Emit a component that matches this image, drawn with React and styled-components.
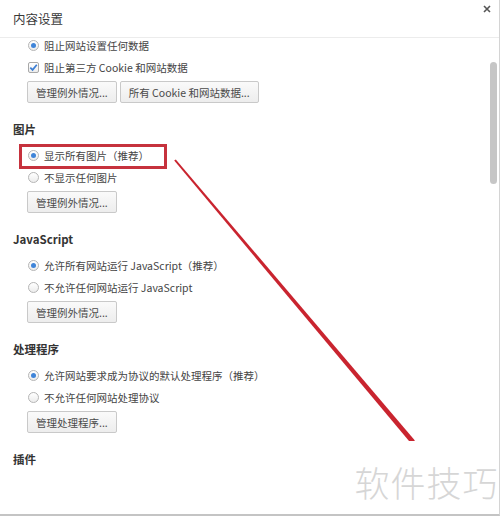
import styled, { createGlobalStyle } from 'styled-components';

const GlobalStyle = createGlobalStyle`
  body {
    margin: 0;
    background: #fff;
    font-family: 'Noto Sans CJK SC', 'Noto Sans', sans-serif;
  }
`;

const sections = [
  {
    title: null,
    options: [
      { type: 'radio', label: '阻止网站设置任何数据', checked: true },
      { type: 'checkbox', label: '阻止第三方 Cookie 和网站数据', checked: true },
    ],
    buttons: ['管理例外情况...', '所有 Cookie 和网站数据...'],
  },
  {
    title: '图片',
    options: [
      { type: 'radio', label: '显示所有图片（推荐）', checked: true },
      { type: 'radio', label: '不显示任何图片' },
    ],
    buttons: ['管理例外情况...'],
  },
  {
    title: 'JavaScript',
    options: [
      { type: 'radio', label: '允许所有网站运行 JavaScript（推荐）', checked: true },
      { type: 'radio', label: '不允许任何网站运行 JavaScript' },
    ],
    buttons: ['管理例外情况...'],
  },
  {
    title: '处理程序',
    options: [
      { type: 'radio', label: '允许网站要求成为协议的默认处理程序（推荐）', checked: true },
      { type: 'radio', label: '不允许任何网站处理协议' },
    ],
    buttons: ['管理处理程序...'],
  },
  {
    title: '插件',
    options: [],
    buttons: [],
  },
];

const App = () => {
  return (
    <>
      <GlobalStyle />
      <Dialog>
        <Header>
          <Title>内容设置</Title>
          <CloseButton type="button">
            <svg width="8" height="8" viewBox="0 0 8 8">
              <path d="M1 1L7 7M7 1L1 7" stroke="#555" strokeWidth="1.6" />
            </svg>
          </CloseButton>
        </Header>

        <Body>
          <Content>
            <Scrolled>
              {sections.map((section, i) => (
                <Section key={i} $first={i === 0}>
                  {section.title && <Heading>{section.title}</Heading>}
                  {section.options.map(opt => (
                    <OptionRow key={opt.label}>
                      {opt.type === 'radio' ? (
                        <Radio $checked={opt.checked} />
                      ) : (
                        <Checkbox>
                          <svg width="9" height="9" viewBox="0 0 9 9">
                            <path
                              d="M1.3 4.6L3.6 6.9L7.8 1.8"
                              fill="none"
                              stroke="#3d7fd4"
                              strokeWidth="1.7"
                            />
                          </svg>
                        </Checkbox>
                      )}
                      <OptionLabel>{opt.label}</OptionLabel>
                    </OptionRow>
                  ))}
                  {section.buttons.length > 0 && (
                    <ButtonRow>
                      {section.buttons.map(b => (
                        <Button key={b} type="button">
                          {b}
                        </Button>
                      ))}
                    </ButtonRow>
                  )}
                </Section>
              ))}
            </Scrolled>
          </Content>
          <ScrollTrack>
            <ScrollThumb />
          </ScrollTrack>
        </Body>

        <Highlight />
        <Arrow width="500" height="516" viewBox="0 0 500 516">
          <polygon
            points="175.8,159.4 414.9,440.4 411.1,443.6 174.2,160.6"
            fill="#c9242f"
          />
        </Arrow>
        <Watermark>软件技巧</Watermark>
      </Dialog>
    </>
  );
};

const Dialog = styled.div`
  position: relative;
  width: 500px;
  height: 516px;
  box-sizing: border-box;
  border-right: 1px solid #d4d4d4;
  border-bottom: 2px solid #c4c4c4;
  margin-right: 1px;
  overflow: hidden;
  background: #fff;
  display: flex;
  flex-direction: column;
`;

const Header = styled.div`
  height: 37px;
  flex-shrink: 0;
  display: flex;
  align-items: center;
  justify-content: space-between;
  padding-left: 13px;
  padding-right: 8px;
  border-bottom: 1px solid #ececec;
`;

const Title = styled.h1`
  margin: 0;
  font-size: 12.5px;
  font-weight: 400;
  color: #3a3a3a;
`;

const CloseButton = styled.button`
  align-self: flex-start;
  margin-top: 5px;
  background: transparent;
  border: none;
  padding: 0;
  width: 8px;
  height: 8px;
  display: flex;
  align-items: center;
  justify-content: center;
`;

const Body = styled.div`
  flex: 1;
  display: flex;
  min-height: 0;
`;

const Content = styled.div`
  flex: 1;
  overflow: hidden;
`;

const Scrolled = styled.div`
  margin-top: -4px;
`;

const Section = styled.div`
  margin-top: ${props => (props.$first ? '0' : '18px')};
`;

const Heading = styled.h2`
  margin: 0 0 7px 13px;
  height: 16px;
  line-height: 16px;
  font-size: 11.5px;
  font-weight: 700;
  color: #333;
`;

const OptionRow = styled.div`
  height: 22px;
  display: flex;
  align-items: center;
  padding-left: 28px;
  gap: 5px;
`;

const Radio = styled.span`
  width: 11px;
  height: 11px;
  box-sizing: border-box;
  border-radius: 50%;
  border: 1px solid #b5b5b5;
  background: linear-gradient(#fff, #ececec);
  display: flex;
  align-items: center;
  justify-content: center;

  &::after {
    content: '';
    width: 5px;
    height: 5px;
    border-radius: 50%;
    background: #3f84d8;
    display: ${props => (props.$checked ? 'block' : 'none')};
  }
`;

const Checkbox = styled.span`
  width: 11px;
  height: 11px;
  box-sizing: border-box;
  border-radius: 2px;
  border: 1px solid #a8a8a8;
  background: linear-gradient(#fff, #ededed);
  display: flex;
  align-items: center;
  justify-content: center;
`;

const OptionLabel = styled.span`
  font-size: 10.5px;
  color: #444;
  white-space: nowrap;
`;

const ButtonRow = styled.div`
  display: flex;
  gap: 3px;
  margin-top: 3px;
  padding-left: 27px;
`;

const Button = styled.button`
  height: 22px;
  padding: 0 8px;
  box-sizing: border-box;
  border: 1px solid #c9c9c9;
  border-radius: 2px;
  background: linear-gradient(#fafafa, #ededed);
  font-family: inherit;
  font-size: 10.5px;
  color: #4a4a4a;
  white-space: nowrap;
`;

const ScrollTrack = styled.div`
  width: 9px;
  flex-shrink: 0;
  padding-top: 24px;
  box-sizing: border-box;
`;

const ScrollThumb = styled.div`
  width: 7px;
  height: 122px;
  border-radius: 4px;
  background: #c6c6c6;
`;

const Highlight = styled.div`
  position: absolute;
  left: 19px;
  top: 144px;
  width: 148px;
  height: 25px;
  box-sizing: border-box;
  border: 3px solid #c6323d;
`;

const Arrow = styled.svg`
  position: absolute;
  left: 0;
  top: 0;
  pointer-events: none;
`;

const Watermark = styled.div`
  position: absolute;
  left: 352px;
  top: 441px;
  right: -2px;
  bottom: -2px;
  background: #fff;
  display: flex;
  align-items: center;
  justify-content: center;
  padding-top: 6px;
  font-size: 35px;
  font-weight: 300;
  color: #d6d6d6;
  letter-spacing: 1px;
`;

export default App;
